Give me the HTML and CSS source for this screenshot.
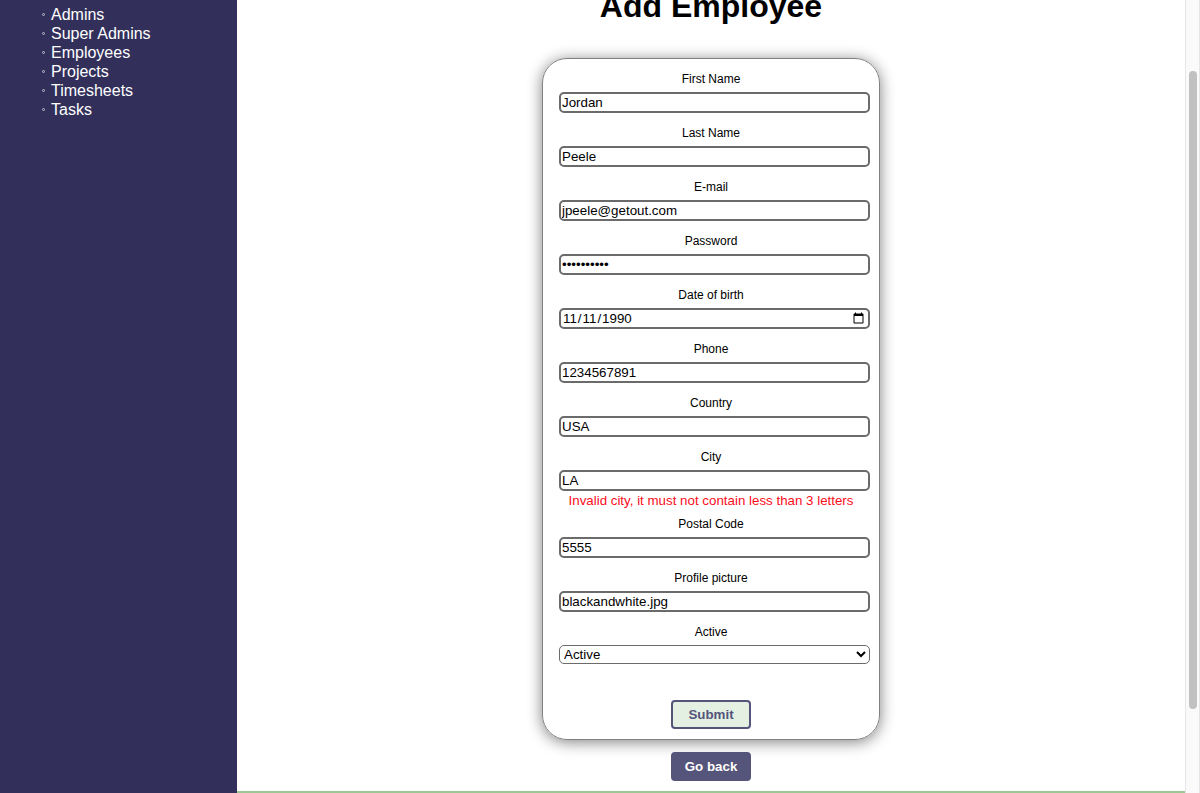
FILE: index.html
```html
<!DOCTYPE html>
<html lang="en">
<head>
<meta charset="utf-8">
<title>Add Employee</title>
<link rel="stylesheet" href="styles.css">
</head>
<body>
<div class="app">
  <nav class="sidebar" aria-label="Main">
    <ul class="menu">
      <li><a href="#admins">Admins</a></li>
      <li><a href="#super-admins">Super Admins</a></li>
      <li><a href="#employees">Employees</a></li>
      <li><a href="#projects">Projects</a></li>
      <li><a href="#timesheets">Timesheets</a></li>
      <li><a href="#tasks">Tasks</a></li>
    </ul>
  </nav>
  <main class="content">
    <h1 class="title">Add Employee</h1>
    <form class="card">
      <div class="field"><label for="first">First Name</label><input id="first" type="text" value="Jordan"></div>
      <div class="field"><label for="last">Last Name</label><input id="last" type="text" value="Peele"></div>
      <div class="field"><label for="email">E-mail</label><input id="email" type="email" value="jpeele@getout.com"></div>
      <div class="field"><label for="password">Password</label><input id="password" type="password" value="abcdefghij"></div>
      <div class="field"><label for="birth">Date of birth</label><input id="birth" type="date" value="1990-11-11"></div>
      <div class="field"><label for="phone">Phone</label><input id="phone" type="text" value="1234567891"></div>
      <div class="field"><label for="country">Country</label><input id="country" type="text" value="USA"></div>
      <div class="field"><label for="city">City</label><input id="city" type="text" value="LA" aria-describedby="city-error"><p class="error" id="city-error">Invalid city, it must not contain less than 3 letters</p></div>
      <div class="field"><label for="postal">Postal Code</label><input id="postal" type="text" value="5555"></div>
      <div class="field"><label for="picture">Profile picture</label><input id="picture" type="text" value="blackandwhite.jpg"></div>
      <div class="field"><label for="active">Active</label><select id="active"><option>Active</option><option>Inactive</option></select></div>
      <button class="button submit" type="submit">Submit</button>
    </form>
    <button class="button back" type="button">Go back</button>
    <div class="divider"></div>
  </main>
  <div class="scrollbar" aria-hidden="true"><div class="thumb"></div></div>
</div>
</body>
</html>
```
FILE: styles.css
```css
*,
*::before {
  box-sizing: border-box;
}

body {
  margin: 0;
  background: #fff;
  color: #000;
  font-family: "Liberation Sans", Arial, sans-serif;
}

.app {
  display: grid;
  grid-template-columns: 1fr 4fr 15px;
  height: 100vh;
  overflow: hidden;
}

.sidebar {
  padding: 5px 16px 0 42px;
  background: #32305b;
}

.menu {
  margin: 0;
  padding: 0;
  list-style: none;
}

.menu li {
  display: flex;
  align-items: center;
  gap: 6px;
  line-height: 19px;
}

.menu li::before {
  content: "";
  width: 3px;
  height: 3px;
  border: 1px solid #c4c3d2;
  border-radius: 50%;
}

.menu a {
  color: #fff;
  font-size: 16px;
  text-decoration: none;
}

.content {
  display: flex;
  flex-direction: column;
  align-items: center;
  min-width: 0;
}

.title {
  margin: -12px 0 34px;
  font-size: 32px;
  line-height: 36px;
}

.card {
  display: flex;
  flex-direction: column;
  gap: 13px;
  width: 100%;
  max-width: 338px;
  padding: 13px 9px 10px;
  border: 1px solid #808080;
  border-radius: 25px;
  box-shadow: 0 2px 15px #808080;
}

.field {
  display: flex;
  flex-direction: column;
}

.field label {
  margin-bottom: 6px;
  font-size: 12px;
  line-height: 14px;
  text-align: center;
}

.field input,
.field select {
  margin: 0 0 0 7px;
  border-radius: 5px;
  background: #fff;
  color: #000;
  font-family: inherit;
}

.field input {
  height: 21px;
  padding: 1px;
  border: 2px solid #6b6b6b;
}

.field select {
  height: 19px;
  border: 1px solid #6b6b6b;
}

.error {
  margin: 1px 0 -6px;
  color: #fb0d1b;
  font-size: smaller;
  line-height: 18px;
  text-align: center;
}

.button {
  width: 80px;
  height: 29px;
  padding: 0;
  border: 2px solid #55547a;
  border-radius: 4px;
  font-family: inherit;
  font-weight: bold;
}

.submit {
  align-self: center;
  margin-top: 23px;
  background: #e4f0e2;
  color: #55547a;
}

.back {
  flex-shrink: 0;
  margin: 12px 0 10px;
  background: #55547a;
  color: #fff;
}

.divider {
  flex-shrink: 0;
  width: 100%;
  height: 2px;
  background: #9cc894;
}

.scrollbar {
  padding: 71px 2px 0 3px;
  border: solid #e6e6e6;
  border-width: 0 1px;
  background: #fafafa;
}

.thumb {
  width: 8px;
  height: calc(100vh - 155px);
  border-radius: 4px;
  background: #c1c1c1;
}
```
